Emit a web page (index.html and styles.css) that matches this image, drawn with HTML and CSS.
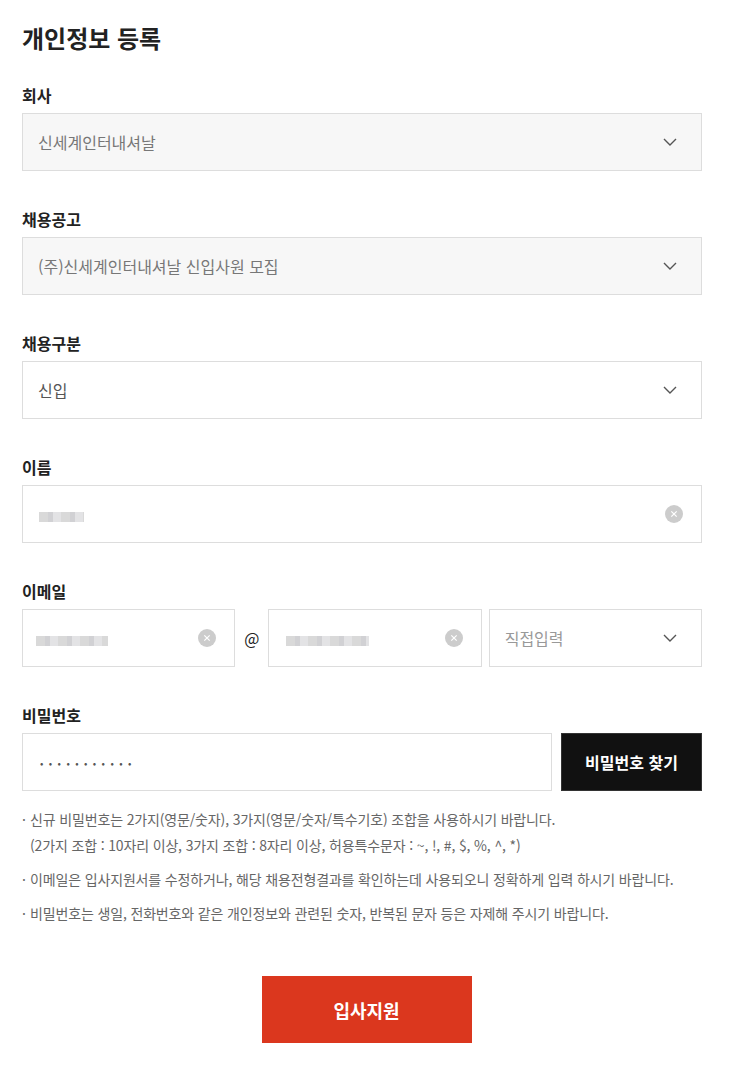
FILE: index.html
```html
<!DOCTYPE html>
<html lang="ko">
<head>
    <meta charset="UTF-8">
    <meta name="viewport" content="width=device-width, initial-scale=1.0">
    <title>개인정보 등록</title>
    <link rel="stylesheet" href="styles.css">
</head>
<body>
    <div class="wrap">
        <h2 class="title">개인정보 등록</h2>

        <div class="group">
            <div class="label">회사</div>
            <div class="field disabled">
                <span class="value">신세계인터내셔날</span>
                <svg class="chevron" width="14" height="8" viewBox="0 0 14 8"><polyline points="1,1 7,7 13,1" fill="none" stroke="#555" stroke-width="1.4"/></svg>
            </div>
        </div>

        <div class="group">
            <div class="label">채용공고</div>
            <div class="field disabled">
                <span class="value">(주)신세계인터내셔날 신입사원 모집</span>
                <svg class="chevron" width="14" height="8" viewBox="0 0 14 8"><polyline points="1,1 7,7 13,1" fill="none" stroke="#555" stroke-width="1.4"/></svg>
            </div>
        </div>

        <div class="group">
            <div class="label">채용구분</div>
            <div class="field">
                <span class="value dark">신입</span>
                <svg class="chevron" width="14" height="8" viewBox="0 0 14 8"><polyline points="1,1 7,7 13,1" fill="none" stroke="#555" stroke-width="1.4"/></svg>
            </div>
        </div>

        <div class="group">
            <div class="label">이름</div>
            <div class="field">
                <span class="mosaic name"></span>
                <svg class="clear" width="18" height="18" viewBox="0 0 18 18"><circle cx="9" cy="9" r="9" fill="#ccc"/><path d="M6.3 6.3 L11.7 11.7 M11.7 6.3 L6.3 11.7" stroke="#fff" stroke-width="1.2"/></svg>
            </div>
        </div>

        <div class="group">
            <div class="label">이메일</div>
            <div class="email-row">
                <div class="field email">
                    <span class="mosaic mail-id"></span>
                    <svg class="clear" width="18" height="18" viewBox="0 0 18 18"><circle cx="9" cy="9" r="9" fill="#ccc"/><path d="M6.3 6.3 L11.7 11.7 M11.7 6.3 L6.3 11.7" stroke="#fff" stroke-width="1.2"/></svg>
                </div>
                <span class="at">@</span>
                <div class="field email">
                    <span class="mosaic mail-domain"></span>
                    <svg class="clear" width="18" height="18" viewBox="0 0 18 18"><circle cx="9" cy="9" r="9" fill="#ccc"/><path d="M6.3 6.3 L11.7 11.7 M11.7 6.3 L6.3 11.7" stroke="#fff" stroke-width="1.2"/></svg>
                </div>
                <div class="field email domain-select">
                    <span class="value light">직접입력</span>
                    <svg class="chevron" width="14" height="8" viewBox="0 0 14 8"><polyline points="1,1 7,7 13,1" fill="none" stroke="#555" stroke-width="1.4"/></svg>
                </div>
            </div>
        </div>

        <div class="group last">
            <div class="label">비밀번호</div>
            <div class="pw-row">
                <div class="field pw">
                    <span class="dots">•••••••••••</span>
                </div>
                <button class="find-btn">비밀번호 찾기</button>
            </div>
        </div>

        <ul class="notes">
            <li>신규 비밀번호는 2가지(영문/숫자), 3가지(영문/숫자/특수기호) 조합을 사용하시기 바랍니다.<br>(2가지 조합 : 10자리 이상, 3가지 조합 : 8자리 이상, 허용특수문자 : ~, !, #, $, %, ^, *)</li>
            <li>이메일은 입사지원서를 수정하거나, 해당 채용전형결과를 확인하는데 사용되오니 정확하게 입력 하시기 바랍니다.</li>
            <li>비밀번호는 생일, 전화번호와 같은 개인정보와 관련된 숫자, 반복된 문자 등은 자제해 주시기 바랍니다.</li>
        </ul>

        <div class="submit-area">
            <button class="submit-btn">입사지원</button>
        </div>
    </div>
</body>
</html>
```

FILE: styles.css
```css
body {
    margin: 0;
    font-family: "Noto Sans CJK KR", "Noto Sans", sans-serif;
    color: #222;
    background: #fff;
}
.wrap {
    width: 680px;
    padding: 22px 32px 40px 22px;
}
.title {
    margin: 0 0 29px;
    font-size: 24px;
    line-height: 32px;
    font-weight: 700;
    color: #222;
}
.group {
    margin-bottom: 36px;
}
.group.last {
    margin-bottom: 0;
}
.label {
    font-size: 16px;
    line-height: 24px;
    font-weight: 700;
    margin-bottom: 6px;
}
.field {
    box-sizing: border-box;
    height: 58px;
    border: 1px solid #ddd;
    background: #fff;
    display: flex;
    align-items: center;
    justify-content: space-between;
    padding: 0 18px 0 15px;
}
.field.disabled {
    background: #f7f7f7;
}
.field .chevron {
    margin-right: 6px;
}
.value {
    font-size: 16px;
    color: #777;
}
.value.dark {
    color: #555;
}
.value.light {
    color: #999;
}
.mosaic {
    display: block;
    height: 16px;
    background:
        linear-gradient(#fff 0 0) 0 0 / 100% 6px no-repeat,
        repeating-linear-gradient(90deg, #d8d8d8 0 9px, #cfcfd2 9px 14px, #e2e2e4 14px 22px);
    opacity: 0.95;
}
.mosaic.name {
    width: 45px;
    margin-left: 1px;
}
.mosaic.mail-id {
    width: 72px;
    margin-left: -2px;
}
.mosaic.mail-domain {
    width: 83px;
    margin-left: 2px;
}
.email-row {
    display: flex;
    align-items: center;
}
.email-row .field {
    flex: 1;
}
.at {
    width: 33px;
    text-align: center;
    font-size: 16px;
    color: #222;
}
.domain-select {
    margin-left: 7px;
}
.pw-row {
    display: flex;
    gap: 9px;
}
.field.pw {
    flex: 1;
    justify-content: flex-start;
}
.dots {
    font-size: 10px;
    letter-spacing: 5.4px;
    color: #555;
    margin-left: 2px;
}
.find-btn {
    width: 141px;
    height: 58px;
    border: 1px solid #333;
    background: #111;
    color: #fff;
    font-family: inherit;
    font-size: 16px;
    font-weight: 700;
}
.notes {
    list-style: none;
    margin: 15px 0 0;
    padding: 0;
    font-size: 14px;
    line-height: 26px;
    letter-spacing: -0.15px;
    color: #666;
}
.notes li {
    position: relative;
    padding-left: 8px;
    margin-bottom: 8px;
}
.notes li::before {
    content: "·";
    position: absolute;
    left: 0;
    top: 0;
}
.submit-area {
    display: flex;
    justify-content: center;
    margin-top: 50px;
    padding-left: 9px;
}
.submit-btn {
    width: 210px;
    height: 67px;
    border: none;
    background: #db371e;
    color: #fff;
    font-family: inherit;
    font-size: 18px;
    font-weight: 700;
}
```
